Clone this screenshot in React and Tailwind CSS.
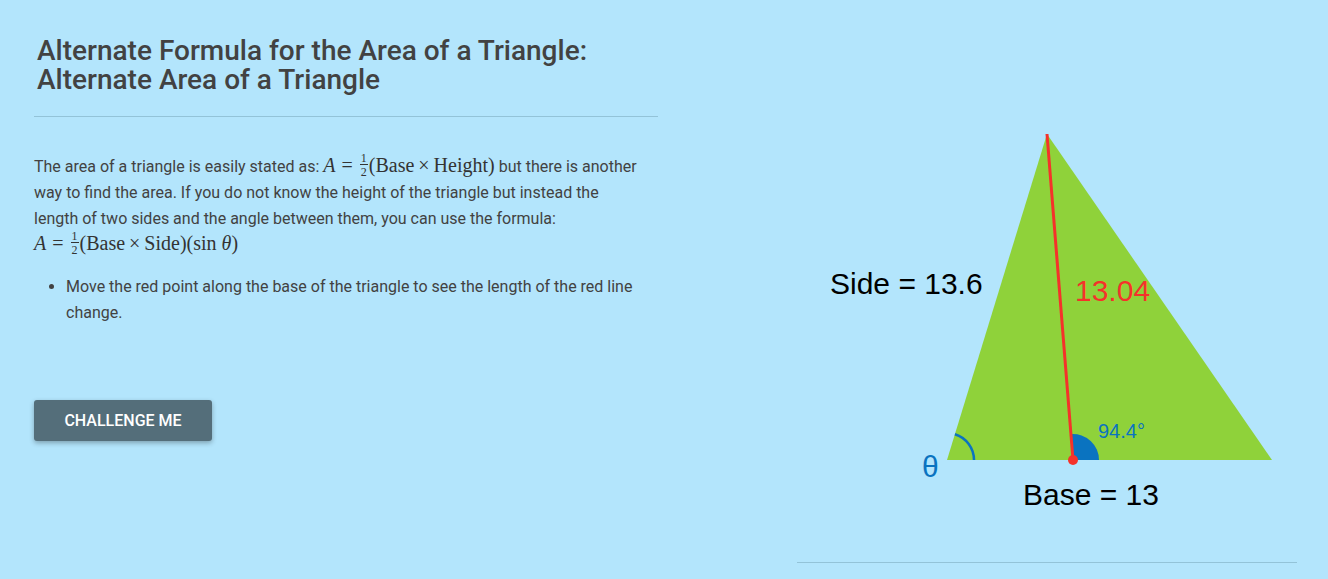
import React from "react";

function Frac() {
  return (
    <span className="inline-flex flex-col items-center align-middle leading-none text-[12px] mx-[1px] -mt-[5px]">
      <span className="px-[1px]">1</span>
      <span className="border-t border-[#333] px-[1px] pt-[1px]">2</span>
    </span>
  );
}

function Formula({ children }) {
  return <span className="font-['Liberation_Serif',serif] text-[20px] leading-none text-[#333]">{children}</span>;
}

function Eq() {
  return <span className="mx-[6px]">=</span>;
}

function Times() {
  return <span className="mx-[4px]">×</span>;
}

function Triangle() {
  // coordinates are page coordinates shifted by the column's left edge (797)
  const ox = 797;
  const A = [1047 - ox, 134];
  const B = [947 - ox, 460];
  const C = [1272 - ox, 460];
  const P = [1073 - ox, 460];
  const r = 26;
  const ang = (94.4 * Math.PI) / 180;
  const sx = P[0] + r * Math.cos(ang);
  const sy = P[1] - r * Math.sin(ang);
  const sideAng = Math.atan2(B[1] - A[1], A[0] - B[0]);
  const tr = 27;
  const tx = B[0] + tr * Math.cos(sideAng);
  const ty = B[1] - tr * Math.sin(sideAng);
  return (
    <svg width="500" height="562" viewBox="0 0 500 562" className="block">
      <polygon points={`${A[0]},${A[1]} ${B[0]},${B[1]} ${C[0]},${C[1]}`} fill="#8fd23a" />
      <path d={`M ${B[0] + tr} ${B[1]} A ${tr} ${tr} 0 0 0 ${tx} ${ty}`} fill="none" stroke="#0a73c0" strokeWidth="2.5" />
      <path d={`M ${P[0]} ${P[1]} L ${P[0] + r} ${P[1]} A ${r} ${r} 0 0 0 ${sx} ${sy} Z`} fill="#0a73c0" />
      <line x1={A[0]} y1={A[1]} x2={P[0]} y2={P[1]} stroke="#f5322a" strokeWidth="3" />
      <circle cx={P[0]} cy={P[1]} r="5" fill="#f5322a" />
      <g fontFamily="'Liberation Sans', Arial, sans-serif">
        <text x={830 - ox} y="294" fontSize="30" fill="#000">Side = 13.6</text>
        <text x={1075 - ox} y="301" fontSize="30" fill="#f5322a">13.04</text>
        <text x={1098 - ox} y="438" fontSize="20" fill="#0a73c0">94.4°</text>
        <text x={922 - ox} y="477" fontSize="30" fill="#0a73c0">θ</text>
        <text x={1023 - ox} y="505" fontSize="30" fill="#000">Base = 13</text>
      </g>
    </svg>
  );
}

export default function App() {
  return (
    <div className="w-[1328px] h-[579px] bg-[#b3e5fc] flex overflow-hidden font-['Roboto',sans-serif] text-[#424242]">
      <div className="w-[624px] ml-[34px] pt-[36px]">
        <h1 className="text-[28px] leading-[29px] font-medium pl-[3px] pb-[22px] border-b border-[#93c3d8]">
          Alternate Formula for the Area of a Triangle:
          <br />
          Alternate Area of a Triangle
        </h1>
        <p className="mt-[37px] text-[16px] leading-[26px] pr-[14px]">
          The area of a triangle is easily stated as:{" "}
          <Formula>
            <i>A</i>
            <Eq />
            <Frac />
            (Base<Times />Height)
          </Formula>{" "}
          but there is another way to find the area. If you do not know the height of the triangle but instead the length of two
          sides and the angle between them, you can use the formula:
          <br />
          <Formula>
            <i>A</i>
            <Eq />
            <Frac />
            (Base<Times />Side)(sin <i>θ</i>)
          </Formula>
        </p>
        <ul className="list-disc pl-[32px] mt-[16px] text-[16px] leading-[26px] pr-[10px]">
          <li>Move the red point along the base of the triangle to see the length of the red line change.</li>
        </ul>
        <button className="mt-[74px] w-[178px] h-[41px] rounded-[3px] bg-[#546e7a] text-white text-[16px] font-medium shadow-[0_2px_5px_rgba(0,0,0,0.3)]">
          CHALLENGE ME
        </button>
      </div>
      <div className="ml-[139px] w-[500px] flex flex-col">
        <Triangle />
        <div className="border-t border-[#93c3d8]" />
      </div>
    </div>
  );
}
